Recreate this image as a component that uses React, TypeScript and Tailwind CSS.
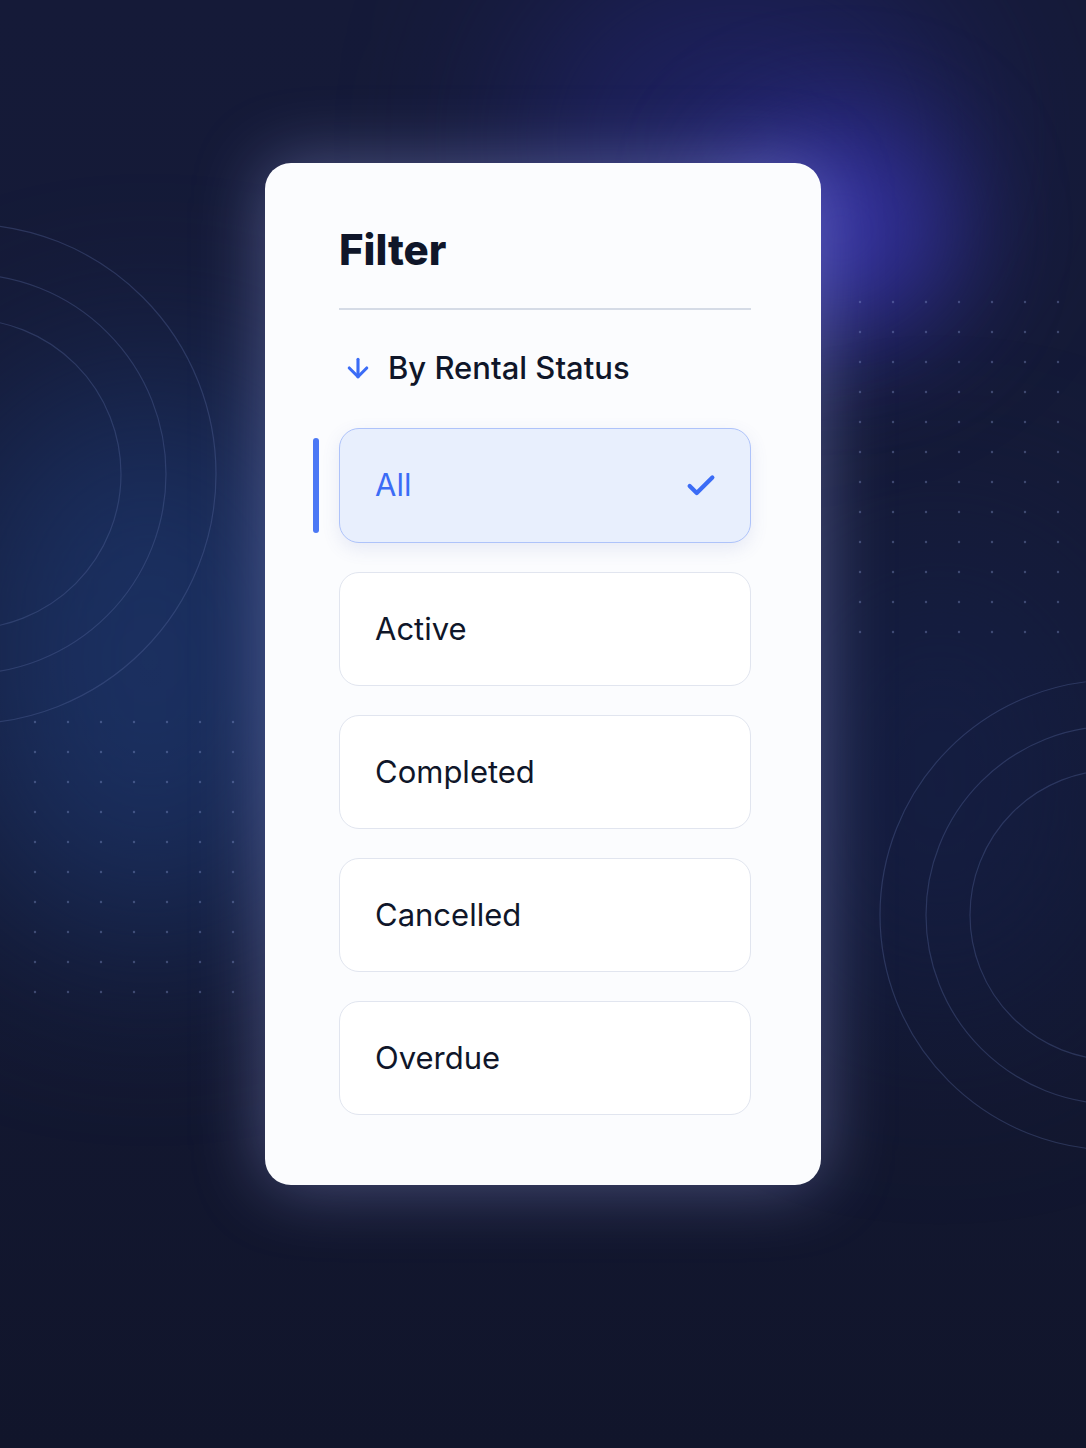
import { ArrowDown, Check } from 'lucide-react'

const options = ['All', 'Active', 'Completed', 'Cancelled', 'Overdue']

// decorative background: glows, rings and dot grids
function Backdrop() {
  return (
    <div className="pointer-events-none absolute inset-0 overflow-hidden">
      <div className="absolute left-[520px] top-[-40px] h-[360px] w-[440px] rounded-full bg-[#24267a] opacity-60 blur-[90px]" />
      <div className="absolute left-[730px] top-[130px] h-[200px] w-[220px] rounded-full bg-[#3d38b8] opacity-80 blur-[60px]" />
      <div className="absolute left-[-40px] top-[380px] h-[560px] w-[380px] rounded-full bg-[#1e3a74] opacity-70 blur-[100px]" />
      <div className="absolute left-[780px] top-[540px] h-[480px] w-[320px] rounded-full bg-[#16224f] opacity-50 blur-[100px]" />
      <svg className="absolute inset-0" width="1086" height="1448">
        <defs>
          <pattern id="dots" x="0" y="0" width="33" height="30" patternUnits="userSpaceOnUse">
            <circle cx="2" cy="2" r="1.2" fill="#8ea0d8" fillOpacity="0.35" />
          </pattern>
        </defs>
        <rect x="856" y="288" width="206" height="360" fill="url(#dots)" />
        <rect x="28" y="698" width="236" height="310" fill="url(#dots)" />
        <g fill="none" stroke="#5a6aa0" strokeOpacity="0.35" strokeWidth="1.2">
          <circle cx="-34" cy="474" r="155" />
          <circle cx="-34" cy="474" r="200" />
          <circle cx="-34" cy="474" r="250" />
          <circle cx="1115" cy="915" r="145" />
          <circle cx="1115" cy="915" r="189" />
          <circle cx="1115" cy="915" r="235" />
        </g>
      </svg>
    </div>
  )
}

export default function App() {
  const selected = 'All'

  return (
    <div
      className="relative min-h-[1448px] w-full overflow-hidden bg-[linear-gradient(180deg,#151a38_0%,#141a36_45%,#11152b_100%)] pt-[163px]"
      style={{ fontFamily: 'Inter, "Noto Sans", sans-serif' }}
    >
      <Backdrop />

      <div className="relative mx-auto w-[556px] rounded-[26px] bg-[#fbfcfe] pb-[70px] pl-[74px] pr-[70px] pt-[62px] shadow-[0_0_70px_rgba(170,180,255,0.38)]">
        <h2 className="text-[42px] font-extrabold leading-[50px] text-[#0f1629]">Filter</h2>
        <div className="mt-[33px] h-[2px] bg-[#d5dbe6]" />

        <div className="mt-[40px] flex h-[36px] items-center gap-[15px] pl-[4px]">
          <ArrowDown className="h-[30px] w-[30px] text-[#3b6cf6]" strokeWidth={2.5} />
          <span className="text-[31px] font-medium text-[#0f1629]">By Rental Status</span>
        </div>

        <div className="mt-[42px] flex flex-col gap-[29px]">
          {options.map((opt) => {
            const active = opt === selected
            return (
              <div key={opt} className="relative">
                {active && (
                  <div className="absolute left-[-26px] top-[10px] bottom-[10px] w-[6px] rounded-full bg-[#4b78f5]" />
                )}
                <div
                  className={
                    active
                      ? 'flex h-[115px] items-center justify-between rounded-[20px] border-[1.5px] border-[#aec3fa] bg-[#e8effd] pl-[35px] pr-[32px] shadow-[0_6px_18px_rgba(80,100,180,0.12)]'
                      : 'flex h-[114px] items-center justify-between rounded-[20px] border-[1.5px] border-[#e1e5ef] bg-white pl-[35px] pr-[32px]'
                  }
                >
                  <span className={active ? 'text-[31px] text-[#3b6cf6]' : 'text-[31px] text-[#0f1629]'}>{opt}</span>
                  {active && <Check className="h-[34px] w-[34px] text-[#3b6cf6]" strokeWidth={3} />}
                </div>
              </div>
            )
          })}
        </div>
      </div>
    </div>
  )
}
